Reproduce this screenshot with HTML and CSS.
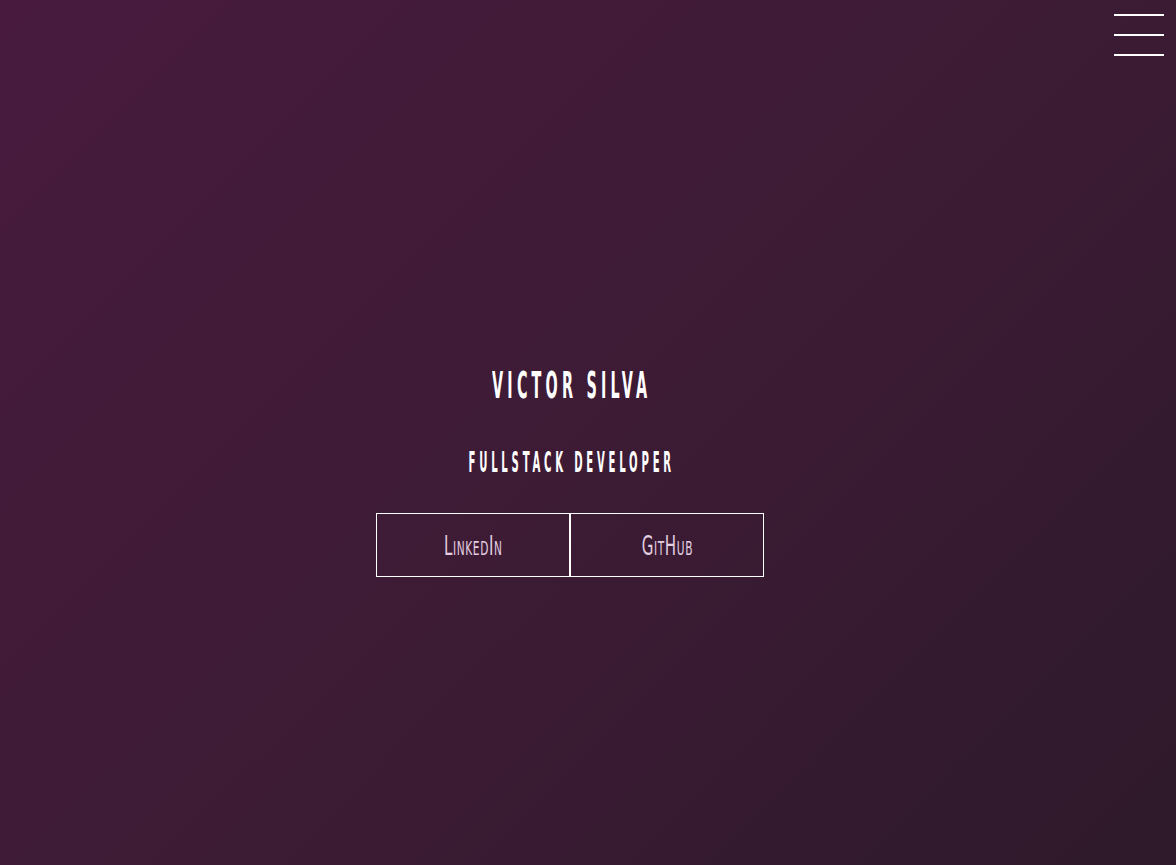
FILE: index.html
```html
<!DOCTYPE html>
<html lang="en">
<head>
<meta charset="utf-8">
<title>Victor Silva</title>
<link rel="stylesheet" href="styles.css">
</head>
<body>
<button class="menu" aria-label="Menu">
  <span class="menu-line"></span>
  <span class="menu-line"></span>
  <span class="menu-line"></span>
</button>
<main class="hero">
  <h1 class="name">Victor Silva</h1>
  <h2 class="role">Fullstack Developer</h2>
  <nav class="links">
    <a class="link" href="#"><span class="link-text">LinkedIn</span></a>
    <a class="link" href="#"><span class="link-text">GitHub</span></a>
  </nav>
</main>
</body>
</html>
```

FILE: styles.css
```css
html, body {
  margin: 0;
  padding: 0;
  height: 100%;
}
body {
  background: linear-gradient(135deg, #481b3e 0%, #3d1b35 50%, #2e1a2b 100%);
  font-family: "Liberation Sans Narrow", "DejaVu Sans Condensed", "Liberation Sans", sans-serif;
  color: #fff;
  overflow: hidden;
}
.menu {
  position: absolute;
  top: 14px;
  right: 12px;
  width: 50px;
  height: 42px;
  padding: 0;
  border: 0;
  background: none;
  display: flex;
  flex-direction: column;
  justify-content: space-between;
  cursor: pointer;
}
.menu-line {
  display: block;
  height: 2px;
  background: #fff;
}
.hero {
  height: 100%;
  display: flex;
  flex-direction: column;
  align-items: center;
  padding: 365px 36px 0 0;
  box-sizing: border-box;
}
.name {
  margin: 0;
  font-size: 38px;
  line-height: 40px;
  font-weight: 700;
  text-transform: uppercase;
  letter-spacing: 10px;
  text-indent: 10px;
  transform: scaleX(0.42);
}
.role {
  margin: 43px 0 0;
  font-size: 28px;
  line-height: 30px;
  font-weight: 700;
  text-transform: uppercase;
  letter-spacing: 9.5px;
  text-indent: 9.5px;
  transform: scaleX(0.4);
}
.links {
  display: flex;
  margin-top: 35px;
}
.link {
  width: 194px;
  height: 64px;
  box-sizing: border-box;
  border: 1px solid #fff;
  display: flex;
  align-items: center;
  justify-content: center;
  color: #e2cfe0;
  text-decoration: none;
  font-size: 27px;
  font-variant: small-caps;
}
.link-text {
  display: inline-block;
  transform: scaleX(0.62);
  letter-spacing: 1px;
}
```
